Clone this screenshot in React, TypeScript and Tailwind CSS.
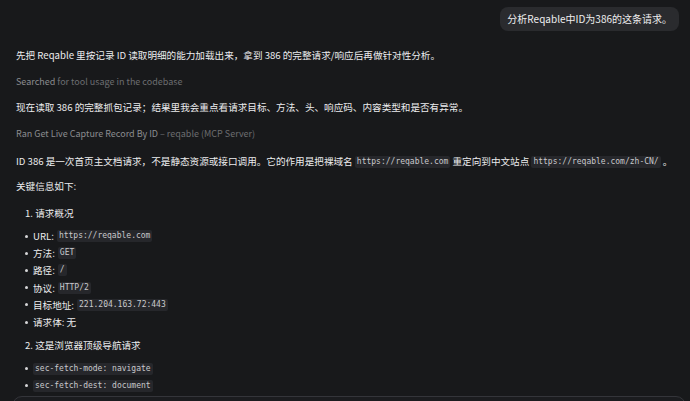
import { ReactNode } from "react"

const sans = `font-["Noto_Sans_CJK_SC","Noto_Sans",sans-serif]`

const Code = ({ children }: { children: ReactNode }) => (
    <code className="font-['DejaVu_Sans_Mono','Liberation_Mono',monospace] text-[8px] leading-[12px] inline-block bg-[#26272b] text-[#c9c9cc] rounded-[2px] px-[2px] align-middle">
        {children}
    </code>
)

const Bullet = ({ children }: { children: ReactNode }) => (
    <li className="flex items-center h-[17.2px]">
        <span className="w-[3px] h-[3px] rounded-full bg-[#d6d6d8] mr-[5px] ml-[9px]" />
        <span className="flex items-center gap-[3px]">{children}</span>
    </li>
)

const App = () => {
    return (
        <div className={`w-[690px] h-[401px] bg-[#18191b] text-[#ececee] text-[9.6px] leading-[16px] overflow-hidden relative ${sans}`}>
            {/* user message */}
            <div className="flex justify-end pt-[7px] pr-[11px]">
                <div className="h-[24px] px-[7px] flex items-center rounded-[8px] bg-[#2a2b2e] text-[10px] text-[#eeeeef]">
                    分析Reqable中ID为386的这条请求。
                </div>
            </div>

            {/* assistant reply */}
            <div className="px-4 flex flex-col">
                <p className="mt-[16px]">
                    先把 Reqable 里按记录 ID 读取明细的能力加载出来，拿到 386 的完整请求/响应后再做针对性分析。
                </p>
                <p className="mt-[11px] text-[9px] text-[#6c6d70]">
                    <span className="text-[#8b8c8f]">Searched</span> for tool usage in the codebase
                </p>
                <p className="mt-[9px]">
                    现在读取 386 的完整抓包记录；结果里我会重点看请求目标、方法、头、响应码、内容类型和是否有异常。
                </p>
                <p className="mt-[11px] text-[9px] text-[#8b8c8f]">
                    Ran Get Live Capture Record By ID <span className="text-[#6c6d70]">– reqable (MCP Server)</span>
                </p>
                <p className="mt-[11px] whitespace-nowrap">
                    ID 386 是一次首页主文档请求，不是静态资源或接口调用。它的作用是把裸域名 <Code>https://reqable.com</Code> 重定向到中文站点 <Code>https://reqable.com/zh-CN/</Code> 。
                </p>
                <p className="mt-[9px]">关键信息如下:</p>
                <p className="mt-[11px] pl-[9px]">1. 请求概况</p>
                <ul className="mt-[6.5px] flex flex-col">
                    <Bullet>URL: <Code>https://reqable.com</Code></Bullet>
                    <Bullet>方法: <Code>GET</Code></Bullet>
                    <Bullet>路径: <Code>/</Code></Bullet>
                    <Bullet>协议: <Code>HTTP/2</Code></Bullet>
                    <Bullet>目标地址: <Code>221.204.163.72:443</Code></Bullet>
                    <Bullet>请求体: 无</Bullet>
                </ul>
                <p className="mt-[6.5px] pl-[9px]">2. 这是浏览器顶级导航请求</p>
                <ul className="mt-[7px] flex flex-col">
                    <Bullet><Code>sec-fetch-mode: navigate</Code></Bullet>
                    <Bullet><Code>sec-fetch-dest: document</Code></Bullet>
                </ul>
            </div>

            {/* composer box peeking in at the bottom */}
            <div className="absolute left-[12px] right-[4px] top-[396px] h-[60px] rounded-[10px] border border-[#34353a] bg-[#1b1c1f]" />
        </div>
    )
}

export default App
